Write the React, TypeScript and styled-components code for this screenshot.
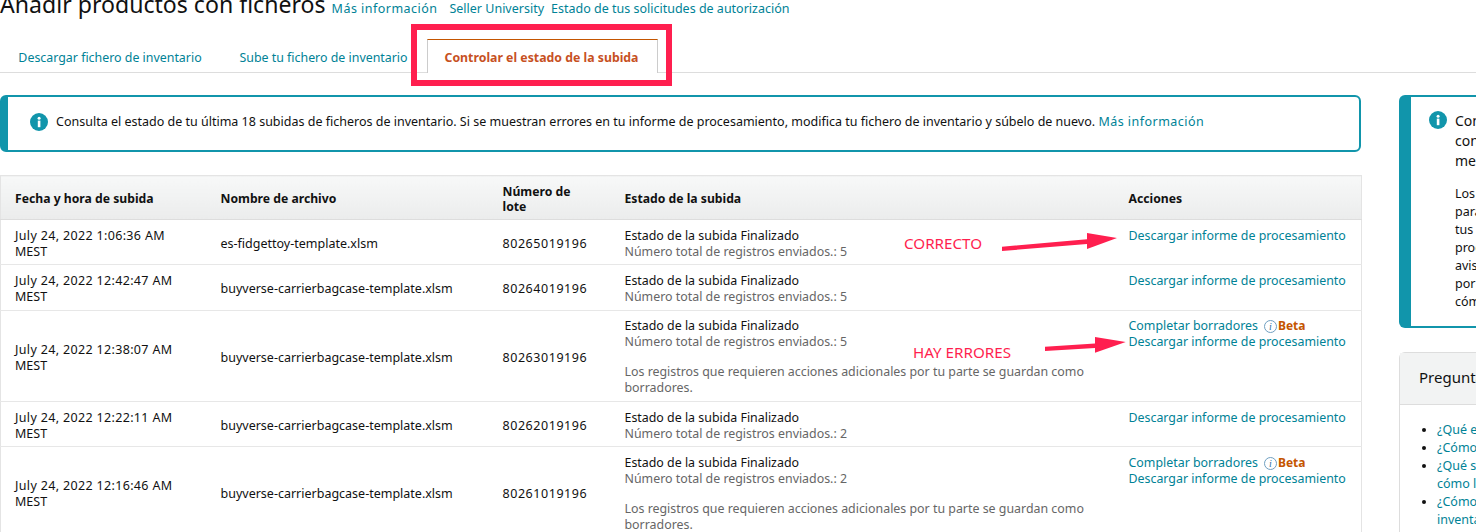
import React from 'react';
import styled, { createGlobalStyle } from 'styled-components';

const teal = '#1195ab';
const linkColor = '#008296';
const ink = '#111';
const red = '#ff1f4f';

const GlobalStyle = createGlobalStyle`
  html, body {
    margin: 0;
    padding: 0;
    width: 1476px;
    height: 532px;
    overflow: hidden;
    background: #fff;
  }
  * {
    box-sizing: border-box;
  }
  body {
    font-family: "Noto Sans", "Open Sans", sans-serif;
    font-size: 12.5px;
    color: ${ink};
  }
`;

const Page = styled.div`
  position: relative;
  width: 1476px;
  height: 532px;
  overflow: hidden;
`;

const Header = styled.div`
  display: flex;
  align-items: baseline;
  height: 20px;
  white-space: nowrap;
`;

const Title = styled.h1`
  margin: -14px 6px 0 0;
  font-size: 23.1px;
  line-height: 30px;
  font-weight: 400;
  color: #111;
`;

const HeaderLink = styled.a<{ $gap?: number }>`
  color: ${linkColor};
  font-size: 12.5px;
  margin-right: ${p => p.$gap ?? 0}px;
`;

const MoreInfo = styled.a<{ $gap?: number }>`
  color: ${linkColor};
  font-size: 12.5px;
  letter-spacing: 0.47px;
  margin-right: ${p => p.$gap ?? 0}px;
`;

const Tabs = styled.div`
  display: flex;
  align-items: flex-end;
  height: 53px;
  border-bottom: 1px solid #ddd;
`;

const Tab = styled.div<{ $active?: boolean; $width: number }>`
  width: ${p => p.$width}px;
  height: ${p => (p.$active ? 34 : 30)}px;
  display: flex;
  align-items: center;
  justify-content: center;
  font-size: ${p => (p.$active ? 12.3 : 12.4)}px;
  color: ${p => (p.$active ? '#c7511f' : linkColor)};
  font-weight: ${p => (p.$active ? 700 : 400)};
  background: #fff;
  ${p => p.$active && `
    border: 1px solid #ccc;
    border-top: 1px solid #c45500;
    border-bottom: none;
    margin-bottom: -1px;
    padding-top: 2px;
    padding-right: 2px;
  `}
`;

const Layout = styled.div`
  display: grid;
  grid-template-columns: 1361px 1fr;
  column-gap: 38px;
  padding-top: 22px;
`;

const Main = styled.div`
  display: flex;
  flex-direction: column;
  gap: 23px;
`;

const Side = styled.div`
  display: flex;
  flex-direction: column;
  gap: 24px;
  white-space: nowrap;
  overflow: hidden;
`;

const Alert = styled.div`
  height: 57px;
  display: flex;
  align-items: center;
  gap: 8px;
  padding-left: 22px;
  border: 2px solid ${teal};
  border-left-width: 8px;
  border-radius: 6px;
  font-size: 12.5px;
  padding-bottom: 4px;
`;

const InfoIcon = ({ size = 18 }: { size?: number }) => (
  <svg width={size} height={size} viewBox="0 0 18 18" style={{ flexShrink: 0 }}>
    <circle cx="9" cy="9" r="9" fill={teal} />
    <rect x="7.8" y="7.6" width="2.6" height="6.6" fill="#fff" />
    <circle cx="9.1" cy="5.2" r="1.5" fill="#fff" />
  </svg>
);

const Table = styled.table`
  width: 1361px;
  border-collapse: collapse;
  table-layout: fixed;
  border: 1px solid #e4e4e4;
  border-bottom: none;
`;

const HeadCell = styled.th<{ $width: number }>`
  width: ${p => p.$width}px;
  height: 44px;
  padding: 2px 14px 0;
  text-align: left;
  font-size: 12.2px;
  line-height: 15px;
  font-weight: 700;
  color: #111;
  background: linear-gradient(#f7f8f8, #ebecec);
  border-bottom: 1px solid #ddd;
`;

const Row = styled.tr<{ $height: number }>`
  height: ${p => p.$height}px;
  border-bottom: 1px solid #e7e7e7;
`;

const Cell = styled.td`
  padding: 3px 14px 0;
  font-size: 12.5px;
  line-height: 16px;
  color: #111;
  vertical-align: middle;
  overflow: hidden;
`;

const TopCell = styled(Cell)<{ $pad: number }>`
  vertical-align: top;
  font-size: 12.4px;
  padding-top: ${p => p.$pad}px;
`;

const DateLine = styled.span`
  letter-spacing: 0.34px;
`;

const BatchCell = styled(Cell)`
  letter-spacing: 0.55px;
`;

const StatusLine = styled.div`
  white-space: nowrap;
`;

const Muted = styled.div<{ $spaced?: boolean }>`
  color: #666;
  margin-top: ${p => (p.$spaced ? 14 : 0)}px;
`;

const ActionLink = styled.a`
  display: block;
  color: ${linkColor};
  white-space: nowrap;
`;

const DraftRow = styled.div`
  display: flex;
  align-items: center;
  white-space: nowrap;
  color: ${linkColor};
`;

const BetaMark = styled.span`
  color: #c45500;
  font-weight: 700;
  font-size: 12px;
`;

const HintIcon = styled.svg`
  margin: 0 1px 0 6px;
  flex-shrink: 0;
`;

const SideAlert = styled.div`
  height: 233px;
  width: 120px;
  padding: 14px 0 0 18px;
  border: 2px solid ${teal};
  border-left-width: 12px;
  border-right: none;
  border-radius: 6px 0 0 6px;
  display: flex;
  gap: 8px;
`;

const SideTitle = styled.div`
  font-size: 14px;
  line-height: 20px;
  color: #111;
`;

const SideText = styled.div`
  margin-top: 14px;
  font-size: 12.5px;
  line-height: 18px;
  color: #111;
`;

const FaqCard = styled.div`
  width: 120px;
  height: 200px;
  border: 1px solid #ddd;
  border-right: none;
  border-radius: 6px 0 0 0;
`;

const FaqHead = styled.div`
  height: 52px;
  display: flex;
  align-items: center;
  padding-left: 19px;
  padding-bottom: 3px;
  font-size: 15px;
  background: #f2f3f3;
  border-bottom: 1px solid #ddd;
`;

const FaqList = styled.ul`
  margin: 16px 0 0;
  padding: 0 0 0 37px;
  font-size: 12.5px;
  line-height: 18px;
  color: #111;
`;

const FaqLink = styled.a`
  color: ${linkColor};
`;

const RedBox = styled.div`
  position: absolute;
  left: 411px;
  top: 24px;
  width: 261px;
  height: 62px;
  border: 6px solid ${red};
`;

const Note = styled.div<{ $x: number; $y: number }>`
  position: absolute;
  left: ${p => p.$x}px;
  top: ${p => p.$y}px;
  color: ${red};
  font-size: 15.2px;
  line-height: 16px;
  white-space: nowrap;
`;

const Arrows = styled.svg`
  position: absolute;
  left: 0;
  top: 0;
  pointer-events: none;
`;

const beta = (
  <DraftRow>
    Completar borradores
    <HintIcon width="13" height="13" viewBox="0 0 13 13">
      <circle cx="6.5" cy="6.5" r="6" fill="none" stroke="#6f9fc0" strokeWidth="1" />
      <text x="6.5" y="10" textAnchor="middle" fontSize="10" fontStyle="italic" fontFamily="Liberation Serif, serif" fill="#2d6f9f">i</text>
    </HintIcon>
    <BetaMark>Beta</BetaMark>
  </DraftRow>
);

const DOWNLOAD = 'Descargar informe de procesamiento';
const DRAFT_NOTE = 'Los registros que requieren acciones adicionales por tu parte se guardan como borradores.';

const uploads = [
  { date: 'July 24, 2022 1:06:36 AM', file: 'es-fidgettoy-template.xlsm', batch: '80265019196', count: 5, height: 45, pad: 8, drafts: false },
  { date: 'July 24, 2022 12:42:47 AM', file: 'buyverse-carrierbagcase-template.xlsm', batch: '80264019196', count: 5, height: 46, pad: 8, drafts: false },
  { date: 'July 24, 2022 12:38:07 AM', file: 'buyverse-carrierbagcase-template.xlsm', batch: '80263019196', count: 5, height: 91, pad: 7, drafts: true },
  { date: 'July 24, 2022 12:22:11 AM', file: 'buyverse-carrierbagcase-template.xlsm', batch: '80262019196', count: 2, height: 45, pad: 8, drafts: false },
  { date: 'July 24, 2022 12:16:46 AM', file: 'buyverse-carrierbagcase-template.xlsm', batch: '80261019196', count: 2, height: 91, pad: 8, drafts: true },
];

const App: React.FC = () => (
  <Page>
    <GlobalStyle />
    <Header>
      <Title>Añadir productos con ficheros</Title>
      <MoreInfo $gap={12}>Más información</MoreInfo>
      <HeaderLink $gap={7}>Seller University</HeaderLink>
      <HeaderLink>Estado de tus solicitudes de autorización</HeaderLink>
    </Header>

    <Tabs>
      <Tab $width={220}>Descargar fichero de inventario</Tab>
      <Tab $width={207}>Sube tu fichero de inventario</Tab>
      <Tab $width={231} $active>Controlar el estado de la subida</Tab>
    </Tabs>

    <Layout>
      <Main>
        <Alert>
          <InfoIcon />
          <span>
            Consulta el estado de tu última 18 subidas de ficheros de inventario. Si se muestran errores en tu informe de procesamiento, modifica tu fichero de inventario y súbelo de nuevo.{' '}
            <MoreInfo>Más información</MoreInfo>
          </span>
        </Alert>

        <Table>
          <thead>
            <tr>
              <HeadCell $width={206}>Fecha y hora de subida</HeadCell>
              <HeadCell $width={282}>Nombre de archivo</HeadCell>
              <HeadCell $width={122}>Número de<br />lote</HeadCell>
              <HeadCell $width={504}>Estado de la subida</HeadCell>
              <HeadCell $width={247}>Acciones</HeadCell>
            </tr>
          </thead>
          <tbody>
            {uploads.map(u => (
              <Row key={u.batch} $height={u.height}>
                <Cell><DateLine>{u.date}</DateLine><br />MEST</Cell>
                <Cell>{u.file}</Cell>
                <BatchCell>{u.batch}</BatchCell>
                <TopCell $pad={u.pad}>
                  <StatusLine>Estado de la subida Finalizado</StatusLine>
                  <Muted>Número total de registros enviados.: {u.count}</Muted>
                  {u.drafts && <Muted $spaced>{DRAFT_NOTE}</Muted>}
                </TopCell>
                <TopCell $pad={u.pad}>
                  {u.drafts && beta}
                  <ActionLink>{DOWNLOAD}</ActionLink>
                </TopCell>
              </Row>
            ))}
          </tbody>
        </Table>
      </Main>

      <Side>
        <SideAlert>
          <InfoIcon />
          <div>
            <SideTitle>Consulta<br />con<br />mensajes</SideTitle>
            <SideText>Los<br />para<br />tus<br />proceso<br />aviso<br />por<br />cómo</SideText>
          </div>
        </SideAlert>
        <FaqCard>
          <FaqHead>Preguntas</FaqHead>
          <FaqList>
            <li><FaqLink>¿Qué es</FaqLink></li>
            <li><FaqLink>¿Cómo</FaqLink></li>
            <li><FaqLink>¿Qué se<br />cómo l</FaqLink></li>
            <li><FaqLink>¿Cómo<br />inventario</FaqLink></li>
          </FaqList>
        </FaqCard>
      </Side>
    </Layout>

    <RedBox />
    <Note $x={904} $y={235}>CORRECTO</Note>
    <Note $x={913} $y={344}>HAY ERRORES</Note>
    <Arrows width="1476" height="532" viewBox="0 0 1476 532">
      <polygon fill={red} points="1002,246.7 1087,239.3 1087,233 1117,238 1087,249 1087,244 1002,251" />
      <polygon fill={red} points="1045,346.7 1095,343.5 1095,337 1125.7,342 1095,352.7 1095,348 1045,351" />
    </Arrows>
  </Page>
);

export default App;
